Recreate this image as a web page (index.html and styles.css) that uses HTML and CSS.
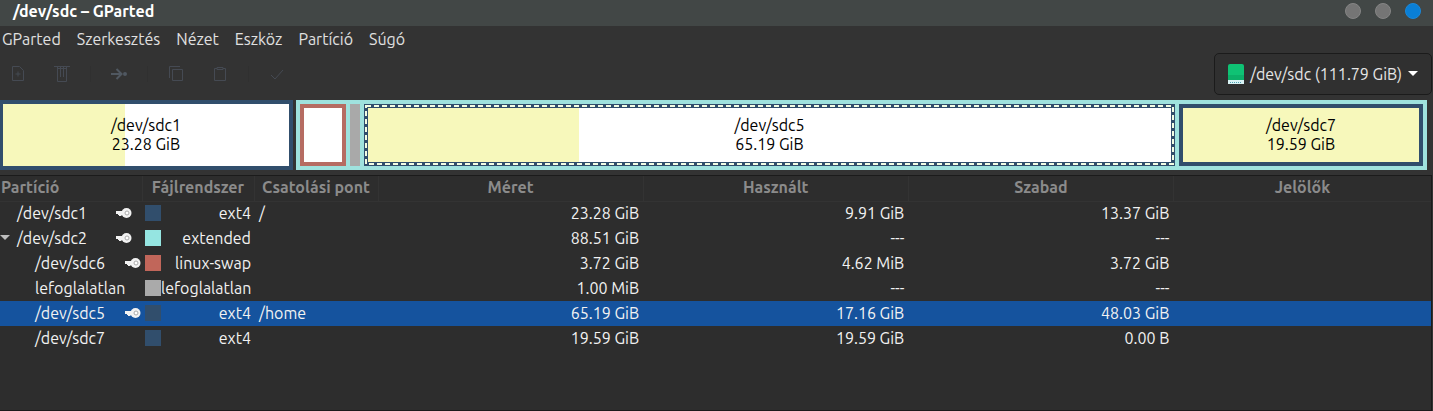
FILE: index.html
```html
<!DOCTYPE html>
<html lang="hu">
<head>
<meta charset="utf-8">
<title>/dev/sdc – GParted</title>
<link rel="stylesheet" href="styles.css">
</head>
<body>
<svg class="defs" aria-hidden="true">
  <symbol id="key" viewBox="0 0 16 12">
    <path fill="#f2f2f2" d="M0 4H7V8H5.500V9H3V8H2V7H0Z"/>
    <circle cx="10.500" cy="6" r="5" fill="#f2f2f2"/>
    <circle cx="11" cy="6" r="2" fill="#fff" stroke="#aaa"/>
  </symbol>
</svg>
<header class="titlebar">
  <h1 class="title">/dev/sdc – GParted</h1>
  <div class="window-buttons">
    <button class="dot" aria-label="Kis méret"></button>
    <button class="dot" aria-label="Teljes méret"></button>
    <button class="dot dot-close" aria-label="Bezárás"></button>
  </div>
</header>
<nav class="menubar">
  <button class="menu">GParted</button>
  <button class="menu">Szerkesztés</button>
  <button class="menu">Nézet</button>
  <button class="menu">Eszköz</button>
  <button class="menu">Partíció</button>
  <button class="menu">Súgó</button>
</nav>
<div class="toolbar">
  <div class="group">
    <button class="tool" disabled aria-label="Új"><svg class="icon" viewBox="0 0 16 16"><path d="M2.500.5H9.500L13.500 4.500V14.500H2.500ZM8 5.500V10.500M5.500 8H10.500"/></svg></button>
    <button class="tool" disabled aria-label="Törlés"><svg class="icon" viewBox="0 0 16 16"><path d="M0 .5H16M3 2.500H13M3.500 .5V15.500H12.500V.5M6.500 1V11M9.500 1V11"/></svg></button>
  </div>
  <div class="group">
    <button class="tool" disabled aria-label="Átméretezés"><svg class="icon icon-strong" viewBox="0 0 16 16"><path d="M0 8H10M5.500 3L10.500 8L5.500 13"/><circle class="solid" cx="14" cy="8" r="2"/></svg></button>
  </div>
  <div class="group">
    <button class="tool" disabled aria-label="Másolás"><svg class="icon" viewBox="0 0 16 16"><path d="M4.500 3.500H14.500V14.500H4.500ZM1.500 12V.5H12"/></svg></button>
    <button class="tool" disabled aria-label="Beillesztés"><svg class="icon" viewBox="0 0 16 16"><path d="M5 2.500H2.500V14.500H13.500V2.500H11M5 1.500H11V3.500H5Z"/></svg></button>
  </div>
  <div class="group">
    <button class="tool" disabled aria-label="Alkalmaz"><svg class="icon" viewBox="0 0 16 16"><path d="M2 9L6 13L14 4"/></svg></button>
  </div>
  <button class="device">
    <svg class="disk" viewBox="0 0 16 20"><rect width="16" height="20" rx="2" fill="#0fc274"/><path fill="#0bb069" d="M0 11H16V16H0Z"/><path fill="#d9f3f5" d="M0 16H16V20H0Z"/><path stroke="#4d9fb0" stroke-dasharray="1 1" d="M2 18.500H14"/></svg>
    <span>/dev/sdc (111.79 GiB)</span>
    <svg class="caret" viewBox="0 0 10 6"><path fill="#fff" d="M0 0H10L5 5Z"/></svg>
  </button>
</div>
<main>
<div class="map">
  <div class="part ext4 sdc1"><div class="used" style="width:42.500%"></div><p class="label">/dev/sdc1<br>23.28 GiB</p></div>
  <div class="extended">
    <div class="part swap"></div>
    <div class="free"></div>
    <div class="part ext4"><div class="used" style="width:26.300%"></div><p class="label">/dev/sdc5<br>65.19 GiB</p><svg class="selection"><rect class="dash" x="1" y="1"/></svg></div>
    <div class="part ext4"><div class="used" style="width:100%"></div><p class="label">/dev/sdc7<br>19.59 GiB</p></div>
  </div>
</div>
<div class="pane">
<table class="list">
  <colgroup><col class="c-part"><col class="c-fs"><col class="c-mount"><col class="c-size"><col class="c-size"><col class="c-size"><col class="c-flags"></colgroup>
  <thead><tr><th class="first">Partíció</th><th>Fájlrendszer</th><th>Csatolási pont</th><th>Méret</th><th>Használt</th><th>Szabad</th><th>Jelölők</th></tr></thead>
  <tbody>
  <tr><td><div class="name"><span>/dev/sdc1</span><svg class="key"><use href="#key"/></svg></div></td><td><div class="fs"><i class="sw sw-ext4"></i>ext4</div></td><td>/</td><td class="num">23.28 GiB</td><td class="num">9.91 GiB</td><td class="num">13.37 GiB</td><td></td></tr>
  <tr><td><div class="name parent"><svg class="expander" viewBox="0 0 10 6"><path fill="#bdbdbd" d="M0 0H10L5 5Z"/></svg><span>/dev/sdc2</span><svg class="key"><use href="#key"/></svg></div></td><td><div class="fs"><i class="sw sw-extended"></i>extended</div></td><td></td><td class="num">88.51 GiB</td><td class="num">---</td><td class="num">---</td><td></td></tr>
  <tr><td><div class="name child"><span>/dev/sdc6</span><svg class="key"><use href="#key"/></svg></div></td><td><div class="fs"><i class="sw sw-swap"></i>linux-swap</div></td><td></td><td class="num">3.72 GiB</td><td class="num">4.62 MiB</td><td class="num">3.72 GiB</td><td></td></tr>
  <tr><td><div class="name child"><span>lefoglalatlan</span></div></td><td><div class="fs"><i class="sw sw-free"></i>lefoglalatlan</div></td><td></td><td class="num">1.00 MiB</td><td class="num">---</td><td class="num">---</td><td></td></tr>
  <tr class="selected"><td><div class="name child"><span>/dev/sdc5</span><svg class="key"><use href="#key"/></svg></div></td><td><div class="fs"><i class="sw sw-ext4"></i>ext4</div></td><td>/home</td><td class="num">65.19 GiB</td><td class="num">17.16 GiB</td><td class="num">48.03 GiB</td><td></td></tr>
  <tr><td><div class="name child"><span>/dev/sdc7</span></div></td><td><div class="fs"><i class="sw sw-ext4"></i>ext4</div></td><td></td><td class="num">19.59 GiB</td><td class="num">19.59 GiB</td><td class="num">0.00 B</td><td></td></tr>
  </tbody>
</table>
</div>
</main>
</body>
</html>
```
FILE: styles.css
```css
* { box-sizing: border-box; }
body {
  margin: 0;
  min-height: 100vh;
  display: flex;
  flex-direction: column;
  background: #333;
  color: #f2f2f2;
  font: 16px/20px Ubuntu, "Noto Sans", sans-serif;
}
button { font: inherit; color: inherit; background: none; border: 0; padding: 0; }
svg { display: block; flex: none; }
.defs { position: absolute; width: 0; height: 0; }

.titlebar {
  display: flex;
  align-items: center;
  justify-content: space-between;
  height: 26px;
  padding: 0 12px 4px 13px;
  background: #424746;
}
.title { margin: 0; font-size: 16px; font-weight: 600; color: #fff; }
.window-buttons { display: flex; gap: 14px; }
.dot { width: 16px; height: 16px; border-radius: 50%; background: #757575; border: 1px solid #858585; }
.dot-close { background: #0a7fd6; border-color: #1a88d9; }

.menubar { display: flex; gap: 16px; height: 27px; padding: 0 2px 2px; align-items: center; color: #e0e0e0; }

.toolbar { display: flex; height: 42px; align-items: center; }
.group { display: flex; gap: 28px; padding: 0 20px; border-right: 1px solid #303030; }
.group:first-child { padding-left: 10px; }
.group:nth-child(4) { border: 0; }
.tool { width: 16px; height: 16px; }
.icon { width: 16px; height: 16px; fill: none; stroke: #454a53; }
.icon-strong { stroke: #505861; stroke-width: 2; }
.solid { fill: #505861; stroke: none; }
.device {
  display: flex;
  align-items: center;
  gap: 6px;
  height: 42px;
  margin-left: auto;
  margin-right: 1px;
  padding: 0 13px;
  border: 1px solid #1b1b1b;
  border-radius: 5px;
  background: #303030;
  color: #e6e6e6;
}
.disk { width: 16px; height: 20px; }
.caret { width: 10px; height: 6px; }

main { display: flex; flex-direction: column; flex: 1; }
.map { display: grid; grid-template-columns: 293fr 1131fr; gap: 3px; height: 80px; padding: 5px 6px 5px 0; }
.part { position: relative; display: grid; align-items: center; border: 4px solid; background: #fff; }
.part > * { grid-area: 1 / 1; }
.ext4 { border-color: #314e6c; }
.swap { border-color: #b66c62; }
.used { height: 100%; background: #f7f8bb; }
.label { margin: 0; text-align: center; color: #000; line-height: 19px; }
.sdc1 { border-left-width: 3px; }
.extended { display: grid; grid-template-columns: 46fr 10fr 811fr 244fr; gap: 4px; padding: 4px; background: #9fe2de; }
.free { background: #a9a9a9; }
.selection { position: absolute; inset: -3px; width: calc(100% + 6px); height: calc(100% + 6px); }
.dash { width: calc(100% - 2px); height: calc(100% - 2px); fill: none; stroke: #f3fde4; stroke-width: 2; stroke-dasharray: 5 3; }

.pane { flex: 1; margin-right: 1px; border: solid #1b1b1b; border-width: 1px 1px 1px 0; background: #2d2d2d; }
.list { width: 100%; border-collapse: collapse; table-layout: fixed; }
.c-part { width: 142px; }
.c-fs { width: 112px; }
.c-mount { width: 124px; }
.c-flags { width: 18%; }
th { height: 25px; padding: 0 0 2px; color: #8b8b8b; font-weight: 700; border: solid #333; border-width: 0 0 1px 1px; }
th.first { text-align: left; border-left: 0; padding-left: 1px; }
td { height: 25px; padding: 0 5px 1px; white-space: nowrap; }
td:first-child { padding: 0 10px 1px 17px; }
td:nth-child(2) { padding: 0 3px 1px; }
.num { text-align: right; padding: 0 4px 1px; }
.name { display: flex; align-items: center; justify-content: space-between; }
.parent { margin-left: -17px; gap: 7px; }
.parent .key { margin-left: auto; }
.child { margin: 0 -9px 0 18px; }
.key { width: 16px; height: 12px; }
.expander { width: 10px; height: 6px; }
.fs { display: flex; align-items: center; justify-content: space-between; }
.sw { width: 16px; height: 16px; flex: none; }
.sw-ext4 { background: #314e6c; }
.sw-extended { background: #95e5e1; }
.sw-swap { background: #c1665a; }
.sw-free { background: #aaa; }
.selected { background: #15539e; }
```
